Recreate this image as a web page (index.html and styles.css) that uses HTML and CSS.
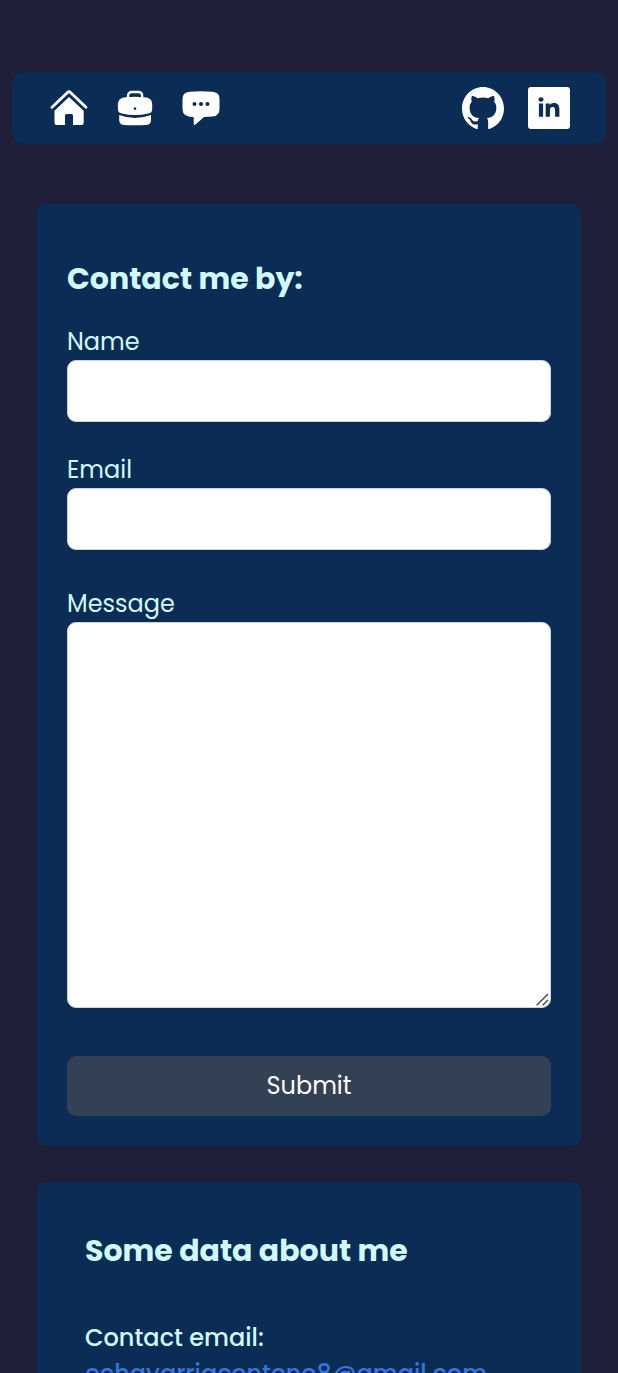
FILE: index.html
```html
<!DOCTYPE html>
<html lang="en">
<head>
<meta charset="utf-8">
<title>Contact</title>
<link rel="stylesheet" href="styles.css">
</head>
<body>
<nav class="navbar">
  <div class="nav-links">
    <a class="nav-icon" aria-label="Home"><svg width="38" height="38" viewBox="0 0 38 38"><path d="M2 18.200 17.500 3.500Q19 2.100 20.500 3.500L36 18.200" fill="none" stroke="#fff" stroke-width="2.800" stroke-linecap="round"/><path d="M19 8 33.700 21.700V33.500q0 2.500-2.500 2.500H23V26.500q0-1.500-1.500-1.500h-5q-1.500 0-1.500 1.500V36H7q-2.500 0-2.500-2.500V21.700Z" fill="#fff"/></svg></a>
    <a class="nav-icon" aria-label="Work"><svg width="38" height="38" viewBox="0 0 38 38"><path d="M12 8.500V7q0-4 4-4h6.200q4 0 4 4v1.500" fill="none" stroke="#fff" stroke-width="2.400"/><path fill-rule="evenodd" d="M10 8.200Q19 7.500 28.500 8.200 36.200 8.600 36.200 15v5.200q0 3.600-4 4.400-13.200 3-26.200 0-4.100-.8-4.100-4.400V15Q1.900 8.600 10 8.200ZM19 18.300a1.300 1.300 0 1 0 .01 0Z" fill="#fff"/><path d="M3.200 25.900Q19 31.900 35 25.900V31q0 4.700-4.500 4.900-11.500.5-22.800 0Q3.200 35.700 3.200 31Z" fill="#fff"/></svg></a>
    <a class="nav-icon" aria-label="Message"><svg width="38" height="38" viewBox="0 0 38 38"><path fill-rule="evenodd" d="M7.500 2.700Q19 1.700 30.500 2.700 37.500 3.200 37.500 10v10q0 7-7 7.600-4 .4-8.500.5L13.500 35.500q-1.800 1.300-1.800-1v-6.300Q.5 28 .5 20V10q0-6.800 7-7.300ZM12.500 13a2 2 0 1 0 .01 0ZM19 13a2 2 0 1 0 .01 0ZM25.500 13a2 2 0 1 0 .01 0Z" fill="#fff"/></svg></a>
  </div>
  <div class="social-links">
    <a class="nav-icon" aria-label="GitHub"><svg width="42" height="42" viewBox="0 .297 24 23.407" preserveAspectRatio="none"><path fill="#fff" d="M12 .297c-6.630 0-12 5.373-12 12 0 5.303 3.438 9.800 8.205 11.385.600.113.820-.258.820-.577 0-.285-.010-1.040-.015-2.040-3.338.724-4.042-1.610-4.042-1.610C4.422 18.070 3.633 17.700 3.633 17.700c-1.087-.744.084-.729.084-.729 1.205.084 1.838 1.236 1.838 1.236 1.070 1.835 2.809 1.305 3.495.998.108-.776.417-1.305.760-1.605-2.665-.300-5.466-1.332-5.466-5.930 0-1.310.465-2.380 1.235-3.220-.135-.303-.540-1.523.105-3.176 0 0 1.005-.322 3.300 1.230.960-.267 1.980-.399 3-.405 1.020.006 2.040.138 3 .405 2.280-1.552 3.285-1.230 3.285-1.230.645 1.653.240 2.873.120 3.176.765.840 1.230 1.910 1.230 3.220 0 4.610-2.805 5.625-5.475 5.920.420.360.810 1.096.810 2.220 0 1.606-.015 2.896-.015 3.286 0 .315.210.690.825.570C20.565 22.092 24 17.592 24 12.297c0-6.627-5.373-12-12-12"/></svg></a>
    <a class="nav-icon" aria-label="LinkedIn"><svg width="42" height="42" viewBox="0 0 42 42"><rect width="42" height="42" rx="3" fill="#fff"/><ellipse cx="13" cy="12.500" rx="2.500" ry="2.200" fill="#0b2c55"/><path fill="#0b2c55" d="M10.900 16.500h4.200v13.300h-4.200zM17.700 16.500h4v1.800c.8-1.400 2.200-2.200 4-2.200 4.400 0 5.700 2.700 5.700 6.500v7.200h-4.300v-6.200c0-1.800-.3-3.500-2.400-3.500s-2.800 1.500-2.800 3.400v6.300h-4.200z"/></svg></a>
  </div>
</nav>
<main class="content">
  <form class="card contact-form">
    <h2 class="title">Contact me by:</h2>
    <label class="label label-name" for="name">Name</label>
    <input class="field" id="name" type="text">
    <label class="label label-email" for="email">Email</label>
    <input class="field" id="email" type="email">
    <label class="label label-message" for="message">Message</label>
    <div class="message-box">
      <textarea class="field message" id="message"></textarea>
      <svg class="grip" width="13" height="13" viewBox="0 0 13 13"><path d="M.7 12.300 12 1M6.700 12.300 12 7" stroke="#444" stroke-width="1.400"/></svg>
    </div>
    <button class="submit" type="button">Submit</button>
  </form>
  <section class="card about">
    <h2 class="title">Some data about me</h2>
    <p class="contact-line">Contact email:</p>
    <a class="email">echavarriacenteno8@gmail.com</a>
  </section>
</main>
</body>
</html>
```
FILE: styles.css
```css
* { box-sizing: border-box; }
html, body { height: 1373px; overflow: hidden; }
body {
  margin: 0;
  padding: 72px 12px 0;
  background: #201f3a;
  color: #cffafe;
  font: 24px/36px Poppins, Inter, sans-serif;
}
.navbar {
  display: flex;
  align-items: center;
  justify-content: space-between;
  height: 72px;
  padding: 0 36px 0 38px;
  border-radius: 12px;
  background: #0b2c55;
}
.nav-links { display: flex; gap: 28px; }
.social-links { display: flex; gap: 24px; }
.nav-icon, .nav-icon svg { display: block; }
.content { padding: 60px 25px 0; }
.card { border-radius: 9px; background: #0b2c55; }
.contact-form { display: flex; flex-direction: column; height: 942px; padding: 51px 30px 30px; }
.title { margin: 0; font-size: 30px; line-height: 48px; font-weight: 700; white-space: nowrap; }
.label { display: block; height: 36px; }
.label-name { margin-top: 21px; }
.label-email { margin-top: 30px; }
.label-message { margin-top: 36px; }
.field {
  display: block;
  width: 100%;
  height: 62px;
  margin: 0;
  padding: 12px;
  border: 1px solid #cbd5e1;
  border-radius: 9px;
  background: #fff;
  font: inherit;
}
.message-box { position: relative; }
.message { height: 386px; resize: none; }
.grip { position: absolute; right: 2px; bottom: 2px; pointer-events: none; }
.submit {
  height: 60px;
  margin: 48px 0 0;
  padding: 0;
  border: 0;
  border-radius: 9px;
  background: #334155;
  color: #fff;
  font: inherit;
}
.about { height: 191px; margin-top: 36px; padding: 45px 48px 0; border-radius: 9px 9px 0 0; }
.contact-line { margin: 45px 0 0; font-weight: 500; }
.email { display: block; color: #3576e0; font-weight: 500; white-space: nowrap; }
```
